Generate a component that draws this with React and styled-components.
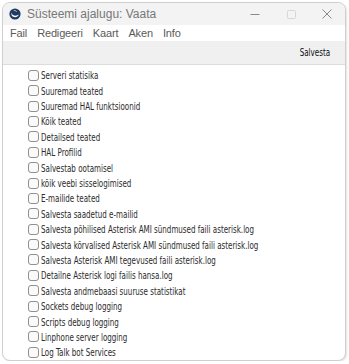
import React from 'react';
import styled, { createGlobalStyle } from 'styled-components';

const GlobalStyle = createGlobalStyle`
  html, body {
    margin: 0;
    padding: 0;
    background: #ffffff;
  }
`;

const Page = styled.div`
  padding: 2px 3px 0 2px;
`;

const Window = styled.div`
  width: 342px;
  height: 357px;
  border: 1px solid #cfcfcf;
  border-radius: 8px;
  overflow: hidden;
  background: #ffffff;
  box-shadow: 1px 1px 2px rgba(0, 0, 0, 0.12);
  display: flex;
  flex-direction: column;
  font-family: "Liberation Sans", Arial, sans-serif;
`;

const TitleBar = styled.div`
  height: 23px;
  background: #f3f3f3;
  display: flex;
  align-items: center;
  padding-left: 6px;
`;

const AppIcon = styled.svg`
  width: 12px;
  height: 12px;
  margin-right: 6px;
`;

const Title = styled.div`
  flex: 1;
  font-size: 12px;
  color: #777777;
`;

const Controls = styled.div`
  display: flex;
  align-items: center;
  height: 100%;
`;

const Control = styled.div`
  width: 36px;
  height: 100%;
  display: flex;
  align-items: center;
  justify-content: center;
  color: ${p => (p.$disabled ? '#d6d6d6' : '#8a8a8a')};
`;

const MenuBar = styled.div`
  height: 16px;
  background: #ffffff;
  display: flex;
  align-items: center;
  gap: 8px;
  padding-left: 6px;
  font-size: 11px;
  color: #5a5a5a;
  letter-spacing: -0.15px;
`;

const MenuItem = styled.span`
  padding: 0 1px;
`;

const Toolbar = styled.div`
  height: 24px;
  background: #f0f0f0;
  border-bottom: 1px solid #dcdcdc;
  display: flex;
  align-items: center;
  justify-content: flex-end;
  padding-right: 15px;
`;

const ToolButton = styled.span`
  display: inline-block;
  font-family: "DejaVu Sans Condensed", "DejaVu Sans", sans-serif;
  font-size: 10.5px;
  color: #111111;
  transform: scaleX(0.76);
  transform-origin: right center;
`;

const List = styled.div`
  padding: 3px 0 0 25px;
  display: flex;
  flex-direction: column;
`;

const Row = styled.label`
  height: 15.4px;
  display: flex;
  align-items: center;
  gap: 2px;
`;

const Box = styled.span`
  flex: none;
  width: 9px;
  height: 9px;
  border: 1px solid #909090;
  border-radius: 3px;
  background: #fafafa;
`;

const Label = styled.span`
  display: inline-block;
  font-family: "DejaVu Sans Condensed", "DejaVu Sans", sans-serif;
  font-size: 10.5px;
  color: #2b2b2b;
  white-space: nowrap;
  transform: scaleX(0.755);
  transform-origin: left center;
`;

const items = [
  'Serveri statisika',
  'Suuremad teated',
  'Suuremad HAL funktsioonid',
  'Kõik teated',
  'Detailsed teated',
  'HAL Profilid',
  'Salvestab ootamisel',
  'kõik veebi sisselogimised',
  'E-mailide teated',
  'Salvesta saadetud e-mailid',
  'Salvesta põhilised Asterisk AMI sündmused faili asterisk.log',
  'Salvesta kõrvalised Asterisk AMI sündmused faili asterisk.log',
  'Salvesta Asterisk AMI tegevused faili asterisk.log',
  'Detailne Asterisk logi failis hansa.log',
  'Salvesta andmebaasi suuruse statistikat',
  'Sockets debug logging',
  'Scripts debug logging',
  'Linphone server logging',
  'Log Talk bot Services',
];

const menus = ['Fail', 'Redigeeri', 'Kaart', 'Aken', 'Info'];

const App = () => {
  return (
    <Page>
      <GlobalStyle />
      <Window>
        <TitleBar>
          <AppIcon viewBox="0 0 12 12">
            <circle cx="6" cy="6" r="5.6" fill="#1f3b63" />
            <path d="M2.2 4.2 C3.2 7.8 7 8.8 10 6.6 C8.6 9.6 4.6 10.2 2.6 7.2 Z" fill="#ffffff" />
            <path d="M4.2 2.4 C6 1.8 7.6 2.6 8 4 C6.8 3 5.4 2.8 4.2 2.4 Z" fill="#ffffff" />
          </AppIcon>
          <Title>Süsteemi ajalugu: Vaata</Title>
          <Controls>
            <Control>
              <svg width="10" height="10" viewBox="0 0 10 10">
                <path d="M0.5 5.5 H9.5" stroke="currentColor" strokeWidth="1" />
              </svg>
            </Control>
            <Control $disabled>
              <svg width="9" height="9" viewBox="0 0 9 9">
                <rect x="0.5" y="0.5" width="8" height="8" rx="1" fill="none" stroke="currentColor" strokeWidth="1" />
              </svg>
            </Control>
            <Control>
              <svg width="10" height="10" viewBox="0 0 10 10">
                <path d="M0.5 0.5 L9.5 9.5 M9.5 0.5 L0.5 9.5" stroke="currentColor" strokeWidth="1" />
              </svg>
            </Control>
          </Controls>
        </TitleBar>
        <MenuBar>
          {menus.map(m => (
            <MenuItem key={m}>{m}</MenuItem>
          ))}
        </MenuBar>
        <Toolbar>
          <ToolButton>Salvesta</ToolButton>
        </Toolbar>
        <List>
          {items.map(text => (
            <Row key={text}>
              <Box />
              <Label>{text}</Label>
            </Row>
          ))}
        </List>
      </Window>
    </Page>
  );
};

export default App;
